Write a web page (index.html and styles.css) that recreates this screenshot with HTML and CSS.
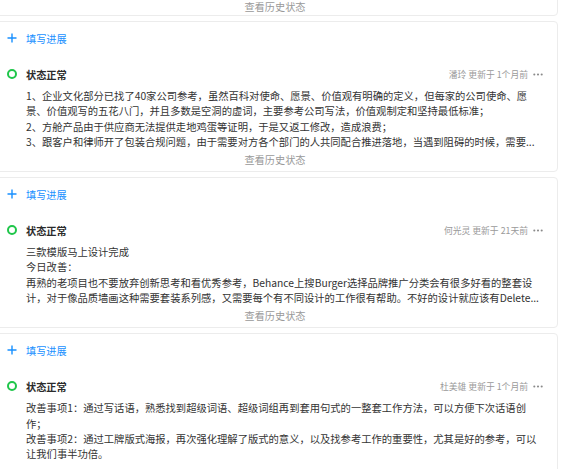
FILE: index.html
```html
<!DOCTYPE html>
<html lang="zh-CN">
<head>
<meta charset="utf-8">
<title>进展记录</title>
<link rel="stylesheet" href="styles.css">
</head>
<body>
<div class="feed">
  <section class="card card--clipped">
    <div class="history">查看历史状态</div>
  </section>

  <section class="card">
    <div class="add">
      <svg class="plus" viewBox="0 0 10 10" width="10" height="10"><path d="M5 0.5V9.5M0.5 5H9.5" stroke="currentColor" stroke-width="1.4" fill="none"/></svg>
      <span>填写进展</span>
    </div>
    <div class="status">
      <span class="ring"></span>
      <span class="status-label">状态正常</span>
      <span class="meta">潘玲 更新于 1个月前</span>
      <svg class="more" viewBox="0 0 10 3" width="10" height="3"><circle cx="1.3" cy="1.5" r="1.05"/><circle cx="5" cy="1.5" r="1.05"/><circle cx="8.7" cy="1.5" r="1.05"/></svg>
    </div>
    <p class="body">1、企业文化部分已找了40家公司参考，虽然百科对使命、愿景、价值观有明确的定义，但每家的公司使命、愿<br>景、价值观写的五花八门，并且多数是空洞的虚词，主要参考公司写法，价值观制定和坚持最低标准；<br>2、方舱产品由于供应商无法提供走地鸡蛋等证明，于是又返工修改，造成浪费；<br>3、跟客户和律师开了包装合规问题，由于需要对方各个部门的人共同配合推进落地，当遇到阻碍的时候，需要...</p>
    <div class="history">查看历史状态</div>
  </section>

  <section class="card">
    <div class="add">
      <svg class="plus" viewBox="0 0 10 10" width="10" height="10"><path d="M5 0.5V9.5M0.5 5H9.5" stroke="currentColor" stroke-width="1.4" fill="none"/></svg>
      <span>填写进展</span>
    </div>
    <div class="status">
      <span class="ring"></span>
      <span class="status-label">状态正常</span>
      <span class="meta">何光灵 更新于 21天前</span>
      <svg class="more" viewBox="0 0 10 3" width="10" height="3"><circle cx="1.3" cy="1.5" r="1.05"/><circle cx="5" cy="1.5" r="1.05"/><circle cx="8.7" cy="1.5" r="1.05"/></svg>
    </div>
    <p class="body">三款模版马上设计完成<br>今日改善：<br>再熟的老项目也不要放弃创新思考和看优秀参考，Behance上搜Burger选择品牌推广分类会有很多好看的整套设<br>计，对于像品质墙画这种需要套装系列感，又需要每个有不同设计的工作很有帮助。不好的设计就应该有Delete...</p>
    <div class="history">查看历史状态</div>
  </section>

  <section class="card card--open">
    <div class="add">
      <svg class="plus" viewBox="0 0 10 10" width="10" height="10"><path d="M5 0.5V9.5M0.5 5H9.5" stroke="currentColor" stroke-width="1.4" fill="none"/></svg>
      <span>填写进展</span>
    </div>
    <div class="status">
      <span class="ring"></span>
      <span class="status-label">状态正常</span>
      <span class="meta">杜美雄 更新于 1个月前</span>
      <svg class="more" viewBox="0 0 10 3" width="10" height="3"><circle cx="1.3" cy="1.5" r="1.05"/><circle cx="5" cy="1.5" r="1.05"/><circle cx="8.7" cy="1.5" r="1.05"/></svg>
    </div>
    <p class="body">改善事项1：通过写话语，熟悉找到超级词语、超级词组再到套用句式的一整套工作方法，可以方便下次话语创<br>作；<br>改善事项2：通过工牌版式海报，再次强化理解了版式的意义，以及找参考工作的重要性，尤其是好的参考，可以<br>让我们事半功倍。</p>
  </section>
</div>
</body>
</html>
```

FILE: styles.css
```css
html, body {
  margin: 0;
  padding: 0;
  background: #ffffff;
  overflow: hidden;
}

body {
  font-family: "Noto Sans CJK SC", "Noto Sans", sans-serif;
  color: #333333;
}

.feed {
  width: 564px;
  margin-left: -6px;
  margin-top: -5px;
  display: flex;
  flex-direction: column;
  gap: 5px;
}

.card {
  border: 1px solid #ececec;
  border-radius: 4px;
  padding: 0 14px 3px 12px;
  background: #ffffff;
}

.card--clipped {
  padding-bottom: 0;
}

.card--open {
  padding-bottom: 40px;
}

.add {
  height: 32px;
  display: flex;
  align-items: center;
  gap: 9px;
  color: #1890ff;
  font-size: 10.2px;
}

.plus {
  display: block;
  flex: none;
}

.status {
  margin-top: 12px;
  height: 16px;
  display: flex;
  align-items: center;
}

.ring {
  flex: none;
  box-sizing: border-box;
  width: 10px;
  height: 10px;
  border: 2.3px solid #1fc64a;
  border-radius: 50%;
  margin-right: 9px;
}

.status-label {
  font-size: 10.2px;
  font-weight: 700;
  color: #2b2b2b;
}

.meta {
  margin-left: auto;
  font-size: 8.8px;
  color: #9a9a9a;
}

.more {
  flex: none;
  margin-left: 5px;
  fill: #8a8a8a;
}

.body {
  margin: 6px 0 0 19px;
  font-size: 10.3px;
  line-height: 15.3px;
  white-space: nowrap;
  color: #333333;
}

.history {
  margin-top: 3px;
  height: 16px;
  line-height: 16px;
  text-align: center;
  font-size: 10.2px;
  color: #999999;
}
```
